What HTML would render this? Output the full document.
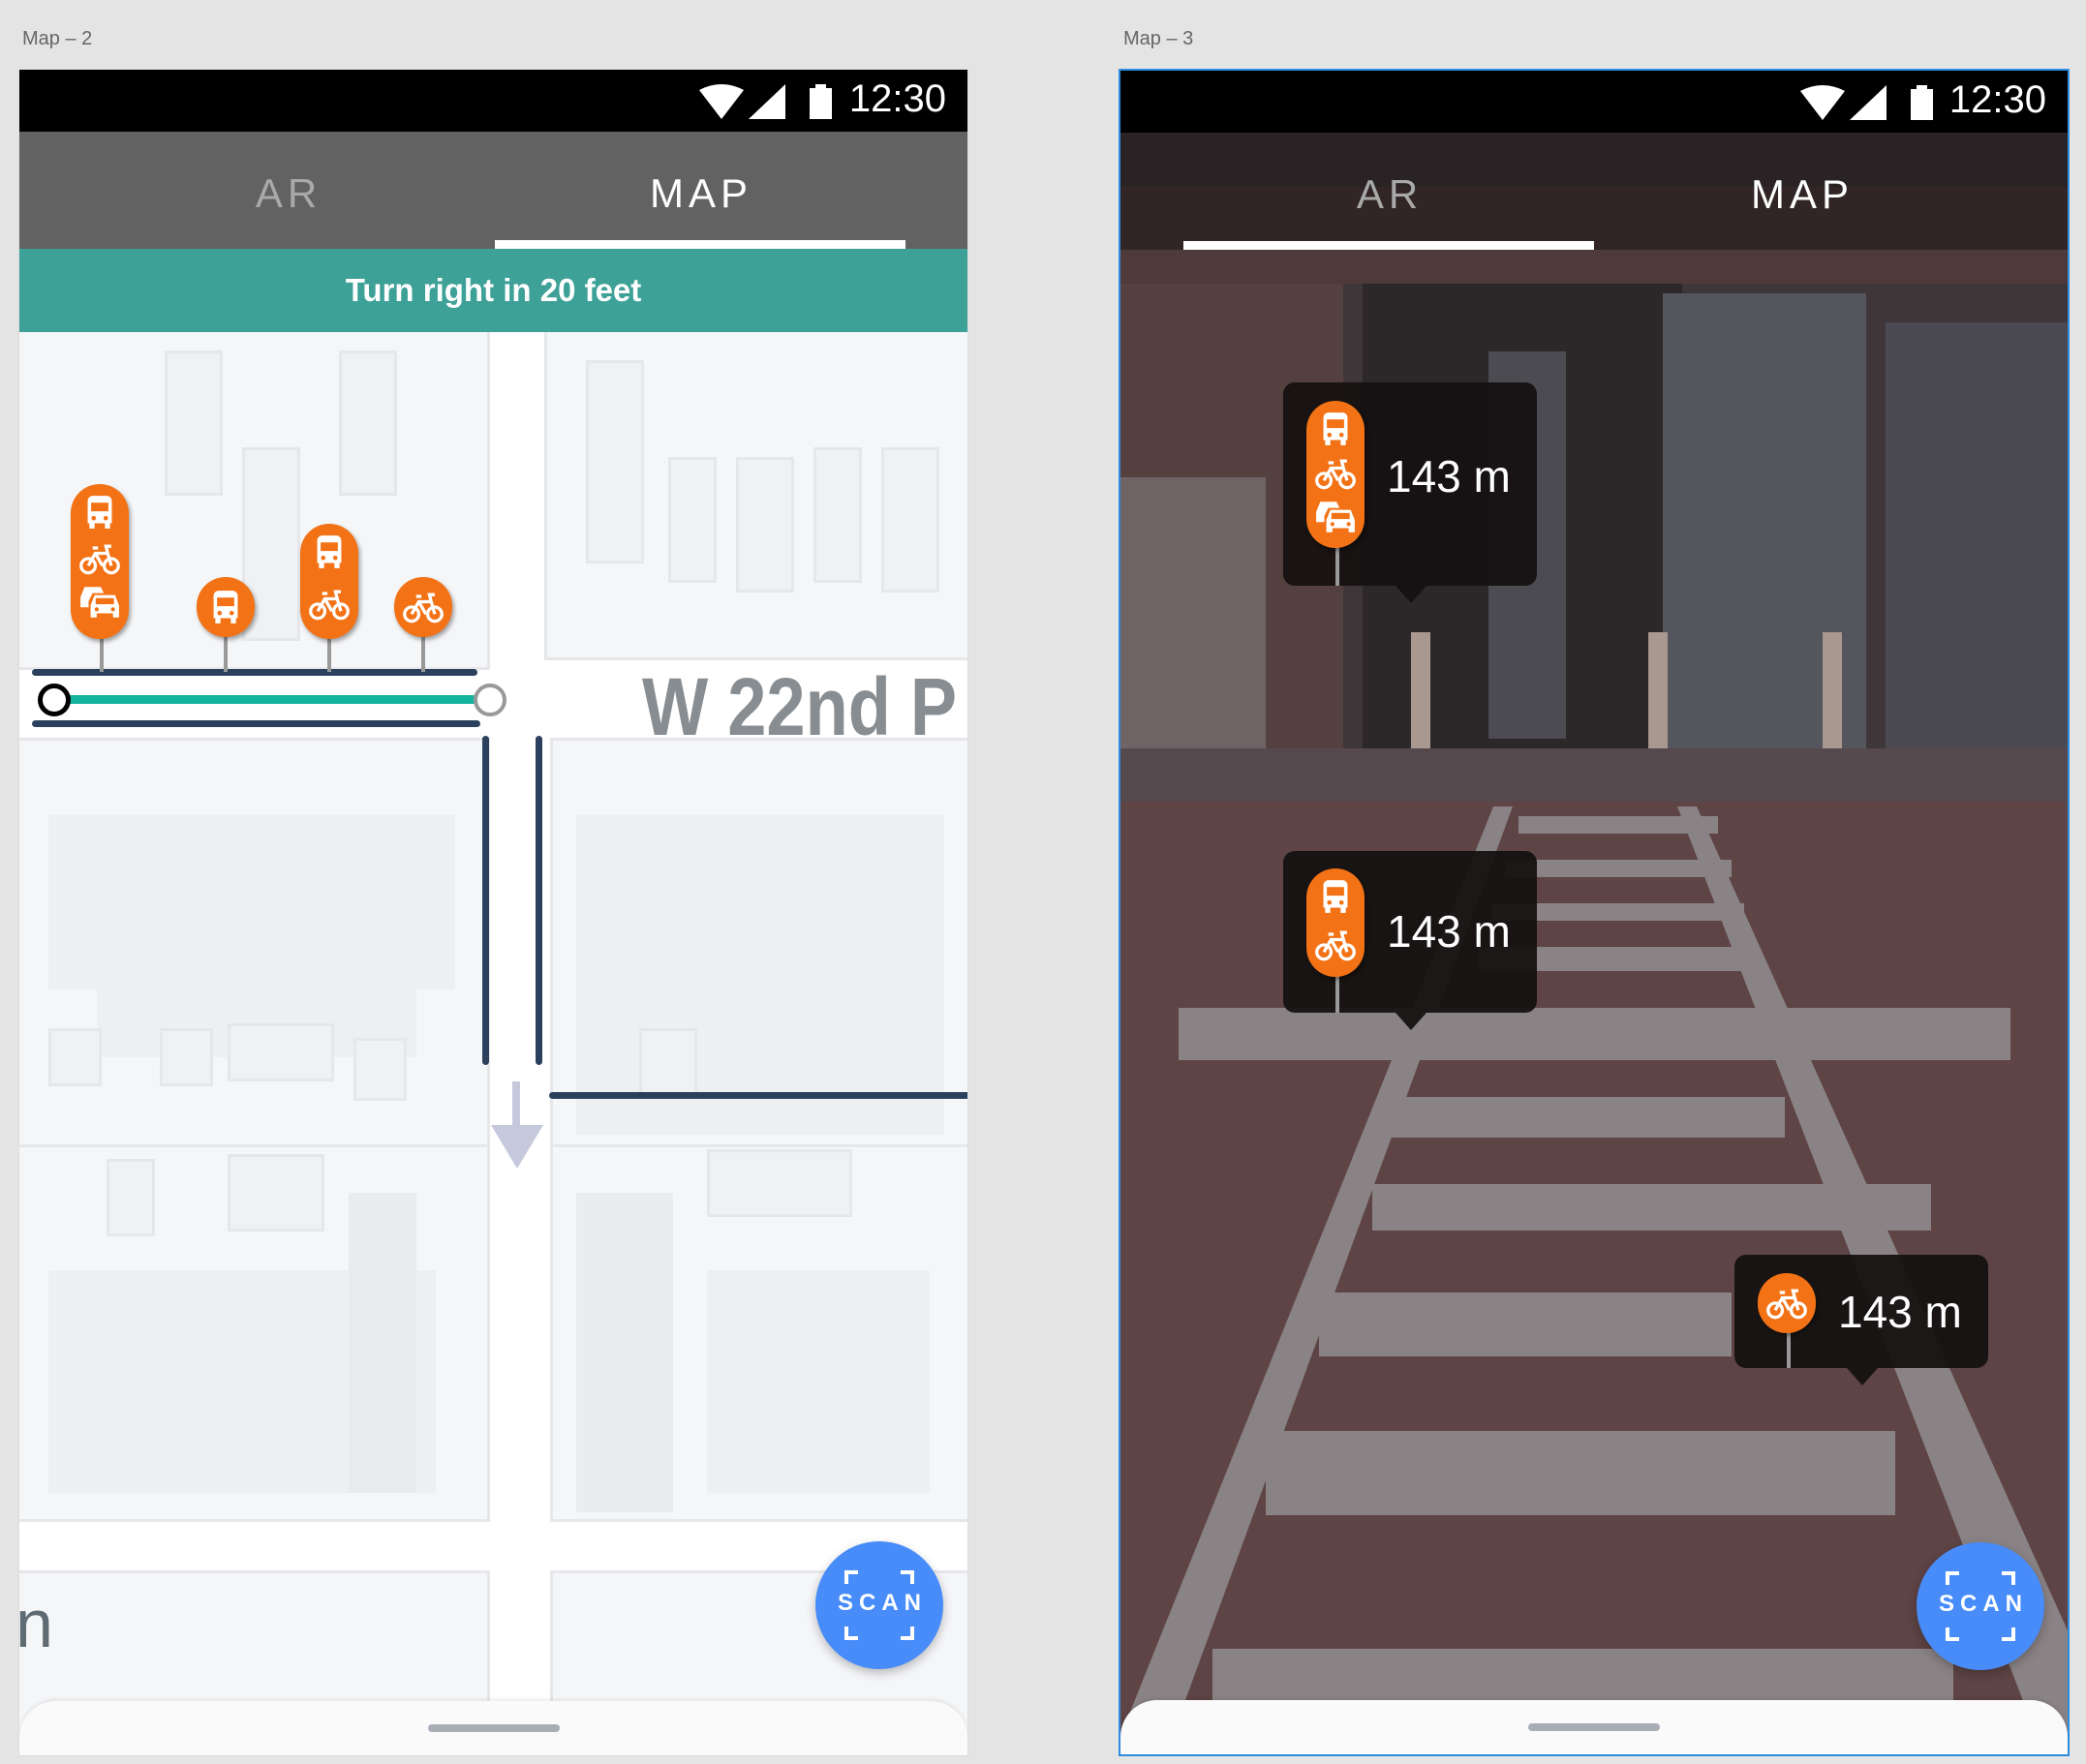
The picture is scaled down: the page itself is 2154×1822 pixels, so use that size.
<!DOCTYPE html>
<html><head><meta charset="utf-8">
<style>
*{margin:0;padding:0;box-sizing:border-box}
body{width:2154px;height:1822px;background:#e4e4e4;position:relative;overflow:hidden;font-family:"Liberation Sans",sans-serif}
.abs{position:absolute}
.lbl{font-size:20px;color:#666}
.status{background:#000;height:64px;left:0;right:0;top:0}
.time{color:#fff;font-size:40px;top:8px;right:22px}
.tab{font-size:42px;letter-spacing:5px;transform:translateX(-50%);top:104px}
.bldg{background:#f0f1f3;border:3px solid #e6e7ea}
.scan{width:132px;height:132px;border-radius:50%;background:#478cf9;box-shadow:0 4px 10px rgba(0,0,0,.25)}
.scan span{position:absolute;left:0;right:0;top:50px;text-align:center;color:#fff;font-size:24px;font-weight:bold;letter-spacing:6px;padding-left:6px}
.nav{left:0;right:0;height:56px;bottom:0;background:#fafafa;border-radius:38px 38px 0 0;box-shadow:0 -2px 4px rgba(0,0,0,.08)}
.nav i{position:absolute;left:50%;margin-left:-68px;width:136px;height:8px;border-radius:4px;background:#a9adb6;top:24px}
.pin{background:#f27215;border-radius:31px;width:60px;box-shadow:2px 3px 4px rgba(0,0,0,.35)}
.stem{width:4px;background:#999}
.call{background:rgba(20,16,16,.93);border-radius:12px}
.call .t{position:absolute;color:#fff;font-size:46px}
.tail{width:0;height:0;border-left:16px solid transparent;border-right:16px solid transparent;border-top:18px solid rgba(20,16,16,.93)}
</style></head><body>
<svg width="0" height="0" style="position:absolute">
<defs>
<symbol id="bus" viewBox="3 1 18 21"><path fill="#fff" d="M5 5a3 3 0 0 1 3-3h8a3 3 0 0 1 3 3v13h-1v3h-3v-3H9v3H6v-3H5z"/><rect x="7" y="6" width="10" height="5" fill="#f27215"/><circle cx="8.5" cy="15" r="1.3" fill="#f27215"/><circle cx="15.5" cy="15" r="1.3" fill="#f27215"/></symbol>
<symbol id="bike" viewBox="0 3 24 18"><g fill="none" stroke="#fff" stroke-width="1.8"><circle cx="5.5" cy="16" r="4"/><circle cx="18.5" cy="16" r="4"/><path d="M5.5 16l4-7h7l2 7M9.5 9l4 7M8 6h3M16.5 9l-1-4h3"/></g></symbol>
<symbol id="cars" viewBox="1 5 21 17"><path fill="#fff" d="M2 11l2-5h8l1.5 3H8l-2 4v3H2z"/><path fill="#fff" d="M7 15l2-5h10l2 5v6h-3v-2H10v2H7z"/><rect x="9.5" y="11.5" width="9" height="3" fill="#f27215"/><circle cx="10" cy="17" r="1" fill="#f27215"/><circle cx="18" cy="17" r="1" fill="#f27215"/></symbol>
</defs></svg>

<div class="abs lbl" style="left:23px;top:29px">Map – 2</div>
<div class="abs lbl" style="left:1160px;top:29px">Map – 3</div>

<!-- LEFT PHONE -->
<div class="abs" style="left:19px;top:71px;width:981px;height:1743px;background:#f6f7f9;overflow:hidden;border:1px solid #ddd">
  <div class="abs" style="left:0;top:0;width:981px;height:1743px;background:#fff"></div>
  <div class="abs bldg" style="left:-4px;top:260px;width:490px;height:360px;background:#f5f6f8"></div>
  <div class="abs bldg" style="left:542px;top:260px;width:450px;height:350px;background:#f5f6f8"></div>
  <div class="abs bldg" style="left:-4px;top:690px;width:490px;height:440px;background:#f5f6f8"></div>
  <div class="abs bldg" style="left:548px;top:690px;width:440px;height:440px;background:#f5f6f8"></div>
  <div class="abs bldg" style="left:-4px;top:1110px;width:490px;height:390px;background:#f5f6f8"></div>
  <div class="abs bldg" style="left:548px;top:1110px;width:440px;height:390px;background:#f5f6f8"></div>
  <div class="abs bldg" style="left:-4px;top:1550px;width:490px;height:250px;background:#f5f6f8"></div>
  <div class="abs bldg" style="left:548px;top:1550px;width:440px;height:250px;background:#f5f6f8"></div>
  <div class="abs bldg" style="left:150px;top:290px;width:60px;height:150px"></div>
  <div class="abs bldg" style="left:230px;top:390px;width:60px;height:200px"></div>
  <div class="abs bldg" style="left:330px;top:290px;width:60px;height:150px"></div>
  <div class="abs bldg" style="left:585px;top:300px;width:60px;height:210px"></div>
  <div class="abs bldg" style="left:670px;top:400px;width:50px;height:130px"></div>
  <div class="abs bldg" style="left:740px;top:400px;width:60px;height:140px"></div>
  <div class="abs bldg" style="left:820px;top:390px;width:50px;height:140px"></div>
  <div class="abs bldg" style="left:890px;top:390px;width:60px;height:150px"></div>
  <div class="abs" style="left:30px;top:770px;width:420px;height:180px;background:#eeeff1"></div>
  <div class="abs" style="left:80px;top:950px;width:330px;height:70px;background:#eeeff1"></div>
  <div class="abs bldg" style="left:30px;top:990px;width:55px;height:60px"></div>
  <div class="abs bldg" style="left:145px;top:990px;width:55px;height:60px"></div>
  <div class="abs bldg" style="left:215px;top:985px;width:110px;height:60px"></div>
  <div class="abs bldg" style="left:345px;top:1000px;width:55px;height:65px"></div>
  <div class="abs" style="left:575px;top:770px;width:380px;height:330px;background:#eeeff1"></div>
  <div class="abs bldg" style="left:640px;top:990px;width:60px;height:70px"></div>
  <div class="abs" style="left:30px;top:1240px;width:400px;height:230px;background:#eeeff1"></div>
  <div class="abs" style="left:340px;top:1160px;width:70px;height:310px;background:#eaebed"></div>
  <div class="abs" style="left:575px;top:1160px;width:100px;height:330px;background:#ebecee"></div>
  <div class="abs" style="left:710px;top:1240px;width:230px;height:230px;background:#eeeff1"></div>
  <div class="abs bldg" style="left:90px;top:1125px;width:50px;height:80px"></div>
  <div class="abs bldg" style="left:215px;top:1120px;width:100px;height:80px"></div>
  <div class="abs bldg" style="left:710px;top:1115px;width:150px;height:70px"></div>
  <div class="abs" style="left:-4px;top:1565px;color:#5f6b72;font-size:70px">n</div>
  <div class="abs" style="left:643px;top:616px;color:#888d91;font-size:84px;font-weight:bold;line-height:1;white-space:nowrap;transform:scaleX(.86);transform-origin:left top">W 22nd P</div>
  <div class="abs" style="left:509px;top:1045px;width:8px;height:50px;background:#c6c9dc"></div>
  <div class="abs" style="left:487px;top:1090px;width:0;height:0;border-left:27px solid transparent;border-right:27px solid transparent;border-top:45px solid #c6c9dc"></div>
  <div class="abs" style="left:13px;top:619px;width:460px;height:7px;border-radius:4px;background:#2a405c"></div>
  <div class="abs" style="left:13px;top:672px;width:463px;height:7px;border-radius:4px;background:#2a405c"></div>
  <div class="abs" style="left:36px;top:646px;width:450px;height:9px;background:#14b39e"></div>
  <div class="abs" style="left:19px;top:634px;width:34px;height:34px;border-radius:50%;border:5px solid #000;background:#fff"></div>
  <div class="abs" style="left:469px;top:634px;width:34px;height:34px;border-radius:50%;border:4px solid #999;background:#fff"></div>
  <div class="abs" style="left:478px;top:688px;width:7px;height:340px;border-radius:4px;background:#2a405c"></div>
  <div class="abs" style="left:533px;top:688px;width:7px;height:340px;border-radius:4px;background:#2a405c"></div>
  <div class="abs" style="left:547px;top:1056px;width:440px;height:7px;border-radius:4px;background:#2a405c"></div>
  <!-- pins -->
  <div class="abs stem" style="left:83px;top:580px;height:42px"></div>
  <div class="abs pin" style="left:53px;top:428px;height:160px"><svg class="abs" style="left:14px;top:10px" width="32" height="38"><use href="#bus"/></svg><svg class="abs" style="left:8px;top:60px" width="44" height="34"><use href="#bike"/></svg><svg class="abs" style="left:8px;top:104px" width="44" height="36"><use href="#cars"/></svg></div>
  <div class="abs stem" style="left:211px;top:580px;height:42px"></div>
  <div class="abs pin" style="left:183px;top:524px;height:62px"><svg class="abs" style="left:14px;top:12px" width="32" height="38"><use href="#bus"/></svg></div>
  <div class="abs stem" style="left:318px;top:580px;height:42px"></div>
  <div class="abs pin" style="left:290px;top:469px;height:119px"><svg class="abs" style="left:14px;top:10px" width="32" height="38"><use href="#bus"/></svg><svg class="abs" style="left:8px;top:66px" width="44" height="34"><use href="#bike"/></svg></div>
  <div class="abs stem" style="left:415px;top:580px;height:42px"></div>
  <div class="abs pin" style="left:387px;top:524px;height:62px"><svg class="abs" style="left:8px;top:14px" width="44" height="34"><use href="#bike"/></svg></div>
  <!-- header -->
  <div class="abs status"></div>
  <svg class="abs" style="left:700px;top:15px" width="160" height="40"><path d="M2 6 Q25 -6 48 6 L25 36Z" fill="#fff"/><path d="M53 36 L91 36 L91 0Z" fill="#fff"/><rect x="116" y="4" width="23" height="32" fill="#fff"/><rect x="122" y="0" width="11" height="5" fill="#fff"/></svg>
  <div class="abs time">12:30</div>
  <div class="abs" style="left:0;right:0;top:64px;height:121px;background:#626262"></div>
  <div class="abs tab" style="left:278px;color:#a9a9a9">AR</div>
  <div class="abs tab" style="left:704px;color:#fff">MAP</div>
  <div class="abs" style="left:491px;top:176px;width:424px;height:9px;background:#fff"></div>
  <div class="abs" style="left:0;right:0;top:185px;height:86px;background:#3ea198;color:#fff;font-weight:bold;font-size:33px;text-align:center;line-height:86px">Turn right in 20 feet</div>
  <div class="abs scan" style="left:822px;top:1520px"><span>SCAN</span><svg class="abs" style="left:30px;top:30px" width="72" height="72" fill="none" stroke="#fff" stroke-width="4"><path d="M2 14V2h12M58 2h12v12M2 58v12h12M58 70h12V58"/></svg></div>
  <div class="abs nav"><i></i></div>
</div>

<!-- RIGHT PHONE -->
<div class="abs" style="left:1155px;top:71px;width:982px;height:1743px;overflow:hidden;border:2px solid #2f8de0;background:#4a3a3c">
  <svg class="abs" style="left:0;top:0" width="982" height="1743">
    <rect x="0" y="0" width="982" height="700" fill="#3f363a"/>
    <rect x="0" y="120" width="982" height="100" fill="#4e3a3b"/>
    <rect x="0" y="220" width="230" height="480" fill="#54403f"/>
    <rect x="0" y="420" width="150" height="280" fill="#6e6466"/>
    <rect x="250" y="220" width="330" height="480" fill="#2c282a"/>
    <rect x="380" y="290" width="80" height="400" fill="#4c4b52"/>
    <rect x="560" y="230" width="210" height="470" fill="#55555e"/>
    <rect x="790" y="260" width="190" height="440" fill="#4b4952"/>
    <rect x="300" y="580" width="20" height="130" fill="#a89890"/>
    <rect x="545" y="580" width="20" height="130" fill="#a89890"/>
    <rect x="725" y="580" width="20" height="130" fill="#a89890"/>
    <rect x="0" y="700" width="982" height="60" fill="#55494e"/>
    <rect x="0" y="755" width="982" height="990" fill="#5e4444"/>
    <g fill="#8a8385">
      <polygon points="411,770 617,770 617,788 411,788"/>
      <polygon points="397,815 631,815 631,833 397,833"/>
      <polygon points="383,860 644,860 644,878 383,878"/>
      <polygon points="370,905 658,905 658,930 370,930"/>
      <polygon points="60,968 919,968 919,1022 60,1022"/>
      <polygon points="273,1060 686,1060 686,1102 273,1102"/>
      <polygon points="260,1150 837,1150 837,1198 260,1198"/>
      <polygon points="205,1262 631,1262 631,1328 205,1328"/>
      <polygon points="150,1405 800,1405 800,1492 150,1492"/>
      <polygon points="95,1630 860,1630 860,1690 95,1690"/>
      <polygon points="385,760 405,760 45,1743 0,1743 0,1720"/>
      <polygon points="575,760 595,760 982,1620 982,1743 955,1743"/>
    </g>
  </svg>
  <div class="abs" style="left:0;right:0;top:64px;height:121px;background:rgba(25,20,22,.55)"></div>
  <div class="abs status"></div>
  <svg class="abs" style="left:700px;top:15px" width="160" height="40"><path d="M2 6 Q25 -6 48 6 L25 36Z" fill="#fff"/><path d="M53 36 L91 36 L91 0Z" fill="#fff"/><rect x="116" y="4" width="23" height="32" fill="#fff"/><rect x="122" y="0" width="11" height="5" fill="#fff"/></svg>
  <div class="abs time">12:30</div>
  <div class="abs tab" style="left:278px;color:#a9a9a9">AR</div>
  <div class="abs tab" style="left:704px;color:#fff">MAP</div>
  <div class="abs" style="left:65px;top:176px;width:424px;height:9px;background:#fff"></div>

  <div class="abs call" style="left:168px;top:322px;width:262px;height:210px">
    <div class="abs stem" style="left:54px;top:150px;height:60px"></div>
    <div class="abs pin" style="left:24px;top:19px;height:152px"><svg class="abs" style="left:14px;top:10px" width="32" height="38"><use href="#bus"/></svg><svg class="abs" style="left:8px;top:58px" width="44" height="34"><use href="#bike"/></svg><svg class="abs" style="left:8px;top:102px" width="44" height="36"><use href="#cars"/></svg></div>
    <div class="t" style="left:107px;top:70px">143 m</div>
  </div>
  <div class="abs tail" style="left:284px;top:532px"></div>
  <div class="abs call" style="left:168px;top:806px;width:262px;height:167px">
    <div class="abs stem" style="left:54px;top:110px;height:57px"></div>
    <div class="abs pin" style="left:24px;top:18px;height:112px"><svg class="abs" style="left:14px;top:10px" width="32" height="38"><use href="#bus"/></svg><svg class="abs" style="left:8px;top:62px" width="44" height="34"><use href="#bike"/></svg></div>
    <div class="t" style="left:107px;top:56px">143 m</div>
  </div>
  <div class="abs tail" style="left:284px;top:973px"></div>
  <div class="abs call" style="left:634px;top:1223px;width:262px;height:117px">
    <div class="abs stem" style="left:54px;top:80px;height:37px"></div>
    <div class="abs pin" style="left:24px;top:19px;height:62px"><svg class="abs" style="left:8px;top:14px" width="44" height="34"><use href="#bike"/></svg></div>
    <div class="t" style="left:107px;top:32px">143 m</div>
  </div>
  <div class="abs tail" style="left:750px;top:1340px"></div>

  <div class="abs scan" style="left:822px;top:1520px"><span>SCAN</span><svg class="abs" style="left:30px;top:30px" width="72" height="72" fill="none" stroke="#fff" stroke-width="4"><path d="M2 14V2h12M58 2h12v12M2 58v12h12M58 70h12V58"/></svg></div>
  <div class="abs nav"><i></i></div>
</div>
</body></html>
